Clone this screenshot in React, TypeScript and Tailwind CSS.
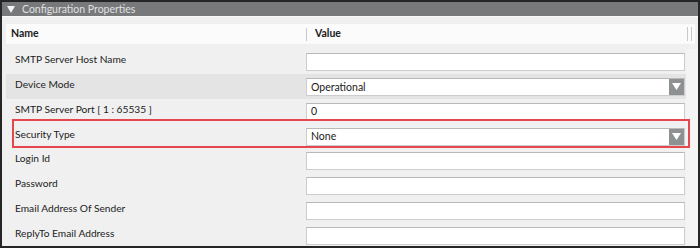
import React from 'react';

type Row = {
  label: string;
  value?: string;
  kind: 'text' | 'select';
  shaded?: boolean;
};

const rows: Row[] = [
  { label: 'SMTP Server Host Name', kind: 'text' },
  { label: 'Device Mode', kind: 'select', value: 'Operational', shaded: true },
  { label: 'SMTP Server Port [ 1 : 65535 ]', kind: 'text', value: '0' },
  { label: 'Security Type', kind: 'select', value: 'None' },
  { label: 'Login Id', kind: 'text' },
  { label: 'Password', kind: 'text' },
  { label: 'Email Address Of Sender', kind: 'text' },
  { label: 'ReplyTo Email Address', kind: 'text' },
];

const DropArrow = () => (
  <div className="w-[15px] h-[16px] bg-[#8e9192] flex items-center justify-center">
    <svg width="9" height="7" viewBox="0 0 9 7">
      <path d="M0 0 H9 L4.5 7 Z" fill="#ffffff" />
    </svg>
  </div>
);

const ValueBox: React.FC<{ row: Row }> = ({ row }) => (
  <div className="mt-[4px] h-[18px] w-[379px] bg-white border border-[#cdcdcd] border-t-[#b9b9b9] flex items-center justify-between">
    <span className="pl-[4px] text-[10.5px] text-[#1a1a1a] leading-none">{row.value ?? ''}</span>
    {row.kind === 'select' && <DropArrow />}
  </div>
);

export default function App() {
  return (
    <div
      className="relative w-[700px] h-[248px] border-2 border-[#262626] bg-[#f0f0f0] overflow-hidden"
      style={{ fontFamily: 'Lato, "Noto Sans", sans-serif' }}
    >
      {/* title bar */}
      <div className="h-[15px] bg-[#77797a] flex items-center pl-[5px] gap-[7px] border-b border-[#fafafa]">
        <svg width="8" height="7" viewBox="0 0 8 7">
          <path d="M0 0 H8 L4 7 Z" fill="#f4f4f4" />
        </svg>
        <span className="text-[10.5px] leading-none text-[#e0e0e0]">Configuration Properties</span>
      </div>

      {/* column header */}
      <div className="mt-[7px] ml-[4px] w-[689px] h-[20px] bg-[#fbfbfb] flex items-center">
        <span className="w-[300px] pl-[5px] text-[10.5px] font-bold text-[#1a1a1a]">Name</span>
        <div className="w-px h-[13px] bg-[#c9c9c9]" />
        <span className="flex-1 pl-[8px] text-[10.5px] font-bold text-[#1a1a1a]">Value</span>
        <div className="w-px h-[14px] bg-[#c9c9c9]" />
        <div className="w-[3px]" />
        <div className="w-px h-[14px] bg-[#c9c9c9] mr-[3px]" />
      </div>

      {/* rows */}
      <div className="mt-[5px] flex">
        <div className="ml-[4px] w-[680px] flex flex-col">
          {rows.map((r) => (
            <div
              key={r.label}
              className={`h-[24.85px] flex items-start ${r.shaded ? 'bg-[#e4e4e4]' : ''}`}
            >
              <span className="w-[300px] pl-[9px] pt-[2px] text-[10.2px] leading-[16px] text-[#222222]">
                {r.label}
              </span>
              <ValueBox row={r} />
            </div>
          ))}
        </div>
        <div className="flex-1 bg-[#f4f4f4]" />
      </div>

      {/* highlight annotation */}
      <div className="absolute left-[10px] top-[117px] w-[678px] h-[29px] border-2 border-[#e5474c] pointer-events-none" />
    </div>
  );
}
